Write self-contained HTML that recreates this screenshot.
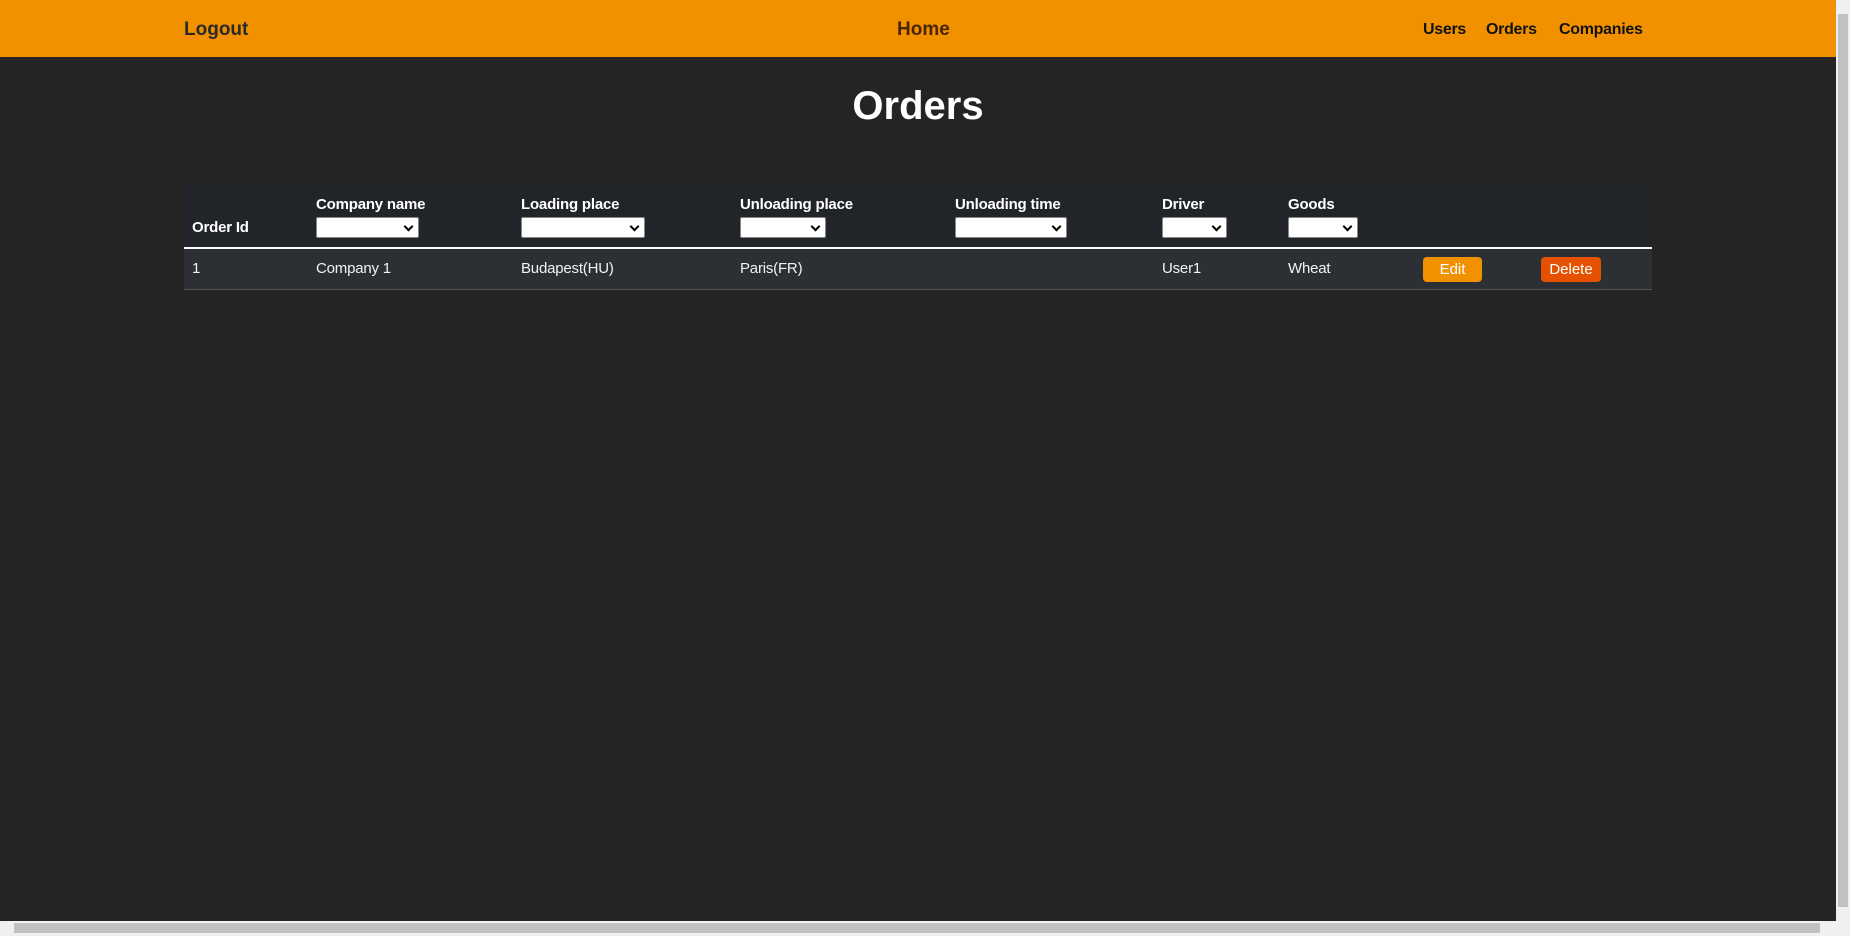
<!DOCTYPE html>
<html><head><meta charset="utf-8"><style>
*{margin:0;padding:0;box-sizing:border-box}
body{width:1850px;height:936px;background:#242424;font-family:"Liberation Sans",sans-serif;position:relative;overflow:hidden;color:#fff}
.a{position:absolute;white-space:nowrap}
.hdr{position:absolute;left:0;top:0;width:1836px;height:57px;background:#f29100}
.nav{font-weight:bold;font-size:16px;letter-spacing:-0.3px;color:#111;top:21px}
.th{font-weight:bold;font-size:15px;letter-spacing:-0.2px;top:196px}
.sel{position:absolute;top:217px;height:21px;background:#fff;border:1px solid #888;border-radius:2px}
.sel:after{content:"";position:absolute;right:6px;top:5px;width:5px;height:5px;border-right:2px solid #000;border-bottom:2px solid #000;transform:rotate(45deg)}
.td{font-size:15px;letter-spacing:-0.2px;top:260px;color:#f2f2f2}
.btn{position:absolute;top:257px;height:25px;border-radius:4px;color:#fff;font-size:15px;text-align:center;line-height:25px}
</style></head><body>
<div class="hdr"></div>
<div class="a" style="left:184px;top:19px;font-size:19px;font-weight:bold;color:#2a2a2a">Logout</div>
<div class="a" style="left:897px;top:19px;font-size:19px;font-weight:bold;color:#4a2600">Home</div>
<div class="a nav" style="left:1423px">Users</div>
<div class="a nav" style="left:1486px">Orders</div>
<div class="a nav" style="left:1559px">Companies</div>
<div class="a" style="left:0;width:1836px;text-align:center;top:84px;font-size:40px;font-weight:bold">Orders</div>
<div class="a" style="left:184px;top:183px;width:1468px;height:64px;background:#212529"></div>
<div class="a" style="left:184px;top:247px;width:1468px;height:2px;background:#fff"></div>
<div class="a" style="left:184px;top:249px;width:1468px;height:41px;background:#2c3034;border-bottom:1px solid #555"></div>
<div class="a th" style="left:192px;top:219px">Order Id</div>
<div class="a th" style="left:316px">Company name</div>
<div class="a th" style="left:521px">Loading place</div>
<div class="a th" style="left:740px">Unloading place</div>
<div class="a th" style="left:955px">Unloading time</div>
<div class="a th" style="left:1162px">Driver</div>
<div class="a th" style="left:1288px">Goods</div>
<div class="sel" style="left:316px;width:103px"></div>
<div class="sel" style="left:521px;width:124px"></div>
<div class="sel" style="left:740px;width:86px"></div>
<div class="sel" style="left:955px;width:112px"></div>
<div class="sel" style="left:1162px;width:65px"></div>
<div class="sel" style="left:1288px;width:70px"></div>
<div class="a td" style="left:192px">1</div>
<div class="a td" style="left:316px">Company 1</div>
<div class="a td" style="left:521px">Budapest(HU)</div>
<div class="a td" style="left:740px">Paris(FR)</div>
<div class="a td" style="left:1162px">User1</div>
<div class="a td" style="left:1288px">Wheat</div>
<div class="btn" style="left:1423px;width:59px;background:#f29100">Edit</div>
<div class="btn" style="left:1541px;width:60px;background:#e65100">Delete</div>
<div class="a" style="left:1836px;top:0;width:14px;height:921px;background:#f0f0f0"></div>
<div class="a" style="left:1838px;top:14px;width:10px;height:893px;background:#c1c1c1"></div>
<div class="a" style="left:0;top:921px;width:1850px;height:15px;background:#f0f0f0"></div>
<div class="a" style="left:14px;top:923px;width:1806px;height:10px;background:#c1c1c1"></div>
</body></html>
